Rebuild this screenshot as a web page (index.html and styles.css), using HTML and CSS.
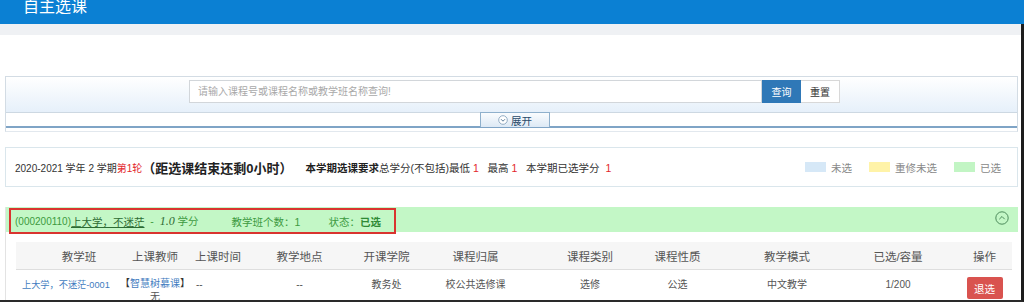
FILE: index.html
```html
<!DOCTYPE html>
<html lang="zh-CN">
<head>
<meta charset="utf-8">
<title>自主选课</title>
<link rel="stylesheet" href="styles.css">
</head>
<body>
<header class="topbar"><h1 class="title">自主选课</h1></header>
<main class="main">
  <div class="strip"></div>
  <section class="search-panel">
    <div class="search-top">
      <div class="search-row">
        <input class="search-input" type="text" placeholder="请输入课程号或课程名称或教学班名称查询!">
        <button class="btn btn-primary">查询</button>
        <button class="btn btn-default">重置</button>
      </div>
    </div>
    <div class="tab-row">
      <div class="tab">
        <svg class="tab-icon" width="10" height="10" viewBox="0 0 10 10"><circle cx="5" cy="5" r="4.3" fill="#fff" stroke="#8aa6c0" stroke-width="0.9"/><path d="M3 4.2 L5 6.2 L7 4.2" fill="none" stroke="#5f7f9c" stroke-width="1"/></svg>
        <span>展开</span>
      </div>
    </div>
  </section>

  <section class="info-panel">
    <span class="term">2020-2021 学年 2 学期<span class="red">第1轮</span></span>
    <span class="remain">（距选课结束还剩0小时）</span>
    <span class="req"><b>本学期选课要求</b>总学分(不包括)最低 <span class="red">1</span>&nbsp;&nbsp; 最高 <span class="red">1</span>&nbsp;&nbsp; 本学期已选学分&nbsp; <span class="red">1</span></span>
    <span class="legend">
      <span class="swatch sw-blue"></span><span class="legend-text">未选</span>
      <span class="swatch sw-yellow"></span><span class="legend-text">重修未选</span>
      <span class="swatch sw-green"></span><span class="legend-text">已选</span>
    </span>
  </section>

  <section class="course-panel">
    <div class="course-bar">
      <div class="course-title">
        <span class="code">(000200110)</span><a class="cname">上大学，不迷茫</a><span class="credit">&nbsp;&nbsp;-&nbsp;&nbsp;<i>1.0</i>&nbsp;学分</span>
        <span class="count">教学班个数：1</span>
        <span class="status">状态：<b>已选</b></span>
      </div>
      <svg class="collapse" width="14" height="14" viewBox="0 0 14 14"><circle cx="7" cy="7" r="6.2" fill="none" stroke="#3f7f4f" stroke-width="0.9"/><path d="M4.3 8.2 L7 5.5 L9.7 8.2" fill="none" stroke="#3f7f4f" stroke-width="0.9"/></svg>
    </div>
    <div class="table">
      <div class="row head">
        <div class="c1">教学班</div><div>上课教师</div><div class="c3">上课时间</div><div>教学地点</div><div>开课学院</div><div>课程归属</div><div class="c7">课程类别</div><div>课程性质</div><div>教学模式</div><div>已选/容量</div><div class="c11">操作</div>
      </div>
      <div class="row body">
        <div class="c1"><a class="link cls-link">上大学，不迷茫-0001</a></div>
        <div class="teacher"><span class="mooc">【<a class="link">智慧树慕课</a>】</span><span>无</span></div>
        <div class="c3">--</div><div>--</div><div>教务处</div><div>校公共选修课</div><div class="c7">选修</div><div>公选</div><div>中文教学</div><div>1/200</div>
        <div class="c11"><button class="btn-danger">退选</button></div>
      </div>
    </div>
  </section>
</main>
</body>
</html>
```
FILE: styles.css
```css
* { box-sizing: border-box; }
html, body { margin: 0; padding: 0; }
body {
  width: 1024px;
  height: 302px;
  overflow: hidden;
  background: #fff;
  font-family: "Liberation Sans", "Noto Sans CJK SC", sans-serif;
  font-size: 11px;
  color: #333;
}
.topbar {
  height: 24px;
  background: #0b80d3;
  overflow: hidden;
}
.title {
  margin: -5px 0 0 23px;
  font-size: 16px;
  line-height: 24px;
  font-weight: normal;
  color: #fff;
}
.main {
  height: 278px;
  border-right: 3px solid #1d1d1d;
  border-bottom: 2px solid #2a2a2a;
  overflow: hidden;
}
.strip { height: 11px; background: #eff1f4; }

.search-panel {
  margin: 41px 3px 0 5px;
  border: 1px solid #d3dce4;
  border-bottom-color: #e2e8ee;
  padding-bottom: 3px;
}
.search-top {
  height: 36px;
  background: linear-gradient(#ffffff, #e6f0fa);
  border-bottom: 1px solid #cdd8e2;
  padding: 3px 0 0 183px;
}
.search-row { display: flex; }
.search-input {
  width: 573px;
  height: 23px;
  border: 1px solid #d2d6da;
  padding: 0 8px;
  font-family: inherit;
  font-size: 10px;
  color: #333;
  outline: none;
}
.search-input::placeholder { color: #a9a9a9; }
.btn {
  height: 23px;
  width: 39px;
  border: 1px solid #d8d8d8;
  font-family: inherit;
  font-size: 10px;
  padding: 0;
}
.btn-primary { background: #2f78b7; border-color: #2f78b7; color: #fff; }
.btn-default { background: #fff; color: #333; border-left: none; }

.tab-row {
  height: 16px;
  border-bottom: 2px solid #7fa4c6;
  padding-left: 474px;
}
.tab {
  width: 70px;
  height: 15px;
  margin-top: -1px;
  border: 1px solid #8fb0cc;
  border-bottom: none;
  background: linear-gradient(#fafcfe, #dde9f5);
  display: flex;
  align-items: center;
  justify-content: center;
  gap: 3px;
  font-size: 10.5px;
  color: #2a4a6a;
}
.tab-icon { display: block; }

.info-panel {
  margin: 15px 3px 0 5px;
  height: 40px;
  border: 1px solid #dae6ec;
  display: flex;
  align-items: center;
  padding-left: 9px;
  font-size: 10px;
  white-space: nowrap;
}
.red { color: #e3262b; }
.remain {
  font-size: 13px;
  font-weight: bold;
  color: #222;
  margin-right: 13px;
}
.req { font-size: 10.5px; }
.req b { color: #222; }
.legend { margin-left: auto; margin-right: 16px; display: flex; align-items: center; color: #888; font-size: 10.5px; }
.swatch { width: 21px; height: 10px; margin-right: 5px; }
.legend-text { margin-right: 17px; }
.legend-text:last-child { margin-right: 0; }
.sw-blue { background: #d6e8f7; }
.sw-yellow { background: #fff3a8; }
.sw-green { background: #c2f5c4; }

.course-panel {
  margin: 20px 3px 0 5px;
  border-left: 1px solid #e3e3e3;
}
.course-bar {
  height: 25px;
  background: #c3f7c6;
  display: flex;
  align-items: flex-start;
  justify-content: space-between;
}
.course-title {
  margin: 1px 0 0 3px;
  height: 26px;
  width: 387px;
  border: 2px solid #d9342f;
  display: flex;
  align-items: center;
  padding-left: 4px;
  font-size: 10.5px;
  color: #3d9a40;
  white-space: nowrap;
}
.code { font-size: 10px; }
.cname { color: #2d6b33; text-decoration: underline; }
.credit { color: #3d9a40; }
.credit i { font-family: "Liberation Serif", serif; font-size: 12px; color: #2d6b33; }
.count { margin-left: 33px; }
.status { margin-left: 28px; }
.status b { font-weight: bold; color: #2f8a35; }
.collapse { margin: 4px 9px 0 0; display: block; }

.table { margin: 10px 6px 0 10px; }
.row {
  display: grid;
  grid-template-columns: 104px 70px 67px 85px 89px 89px 130px 55px 164px 58px 85px;
  text-align: center;
  white-space: nowrap;
}
.row.head {
  height: 28px;
  align-items: center;
  background: #f6f6f6;
  color: #555;
  border-bottom: 1px solid #dedede;
  font-size: 11.5px;
}
.row.head .c1 { padding-left: 22px; }
.row.head .c3 { padding-right: 11px; }
.c7 { padding-left: 10px; }
.c11 { padding-left: 30px; }
.row.body {
  height: 32px;
  align-items: start;
  color: #555;
  font-size: 10px;
}
.row.body > div { padding-top: 8px; line-height: 13px; }
.row.body .c1, .row.body .c3 { text-align: left; padding-left: 6px; }
.link { color: #3f7cc0; }
.cls-link { font-size: 9.2px; }
.row.body .teacher { display: flex; flex-direction: column; padding-top: 7px; }
.mooc { color: #333; }
.row.body .c11 { padding-top: 7px; }
.btn-danger {
  display: block;
  margin: 0 auto;
  width: 36px;
  height: 22px;
  border: none;
  border-radius: 2px;
  background: #d9534f;
  color: #fff;
  font-family: inherit;
  font-size: 10.5px;
  padding: 0;
}
```
